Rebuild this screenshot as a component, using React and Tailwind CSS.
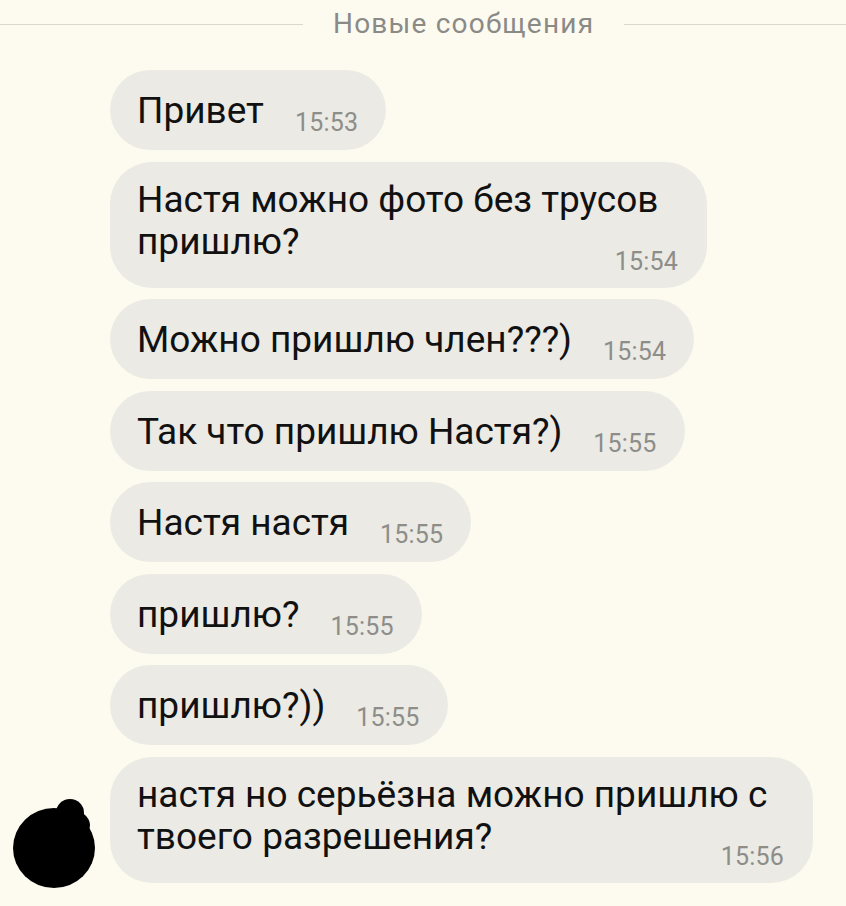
import React from 'react';

const font = { fontFamily: 'Roboto, "Noto Sans", sans-serif' };

function Time({ t }) {
  return <span className="text-[25px] leading-none text-[#8d8d8a] tracking-[0.2px] whitespace-nowrap">{t}</span>;
}

function Bubble({ text, time }) {
  return (
    <div className="inline-flex items-baseline h-[80px] rounded-full bg-[#ebeae4] pl-[27px] pr-[28px] pt-[22px] self-start">
      <span className="text-[37px] leading-none text-[#111] whitespace-nowrap">{text}</span>
      <span className="ml-[31px] translate-y-[8px]">
        <Time t={time} />
      </span>
    </div>
  );
}

function LongBubble({ first, last, time, width }) {
  return (
    <div className={`rounded-[42px] bg-[#ebeae4] pl-[27px] pr-[29px] pt-[17px] pb-[25px] text-[37px] leading-[42px] text-[#111] whitespace-nowrap ${width}`}>
      <div>{first}</div>
      <div className="flex items-baseline justify-between">
        <span>{last}</span>
        <span className="translate-y-[16px]">
          <Time t={time} />
        </span>
      </div>
    </div>
  );
}

export default function App() {
  return (
    <div className="w-[846px] h-[906px] bg-[#fdfbf0] overflow-hidden" style={font}>
      <div className="flex items-center pt-[8px]">
        <div className="w-[303px] h-px bg-[#d9d7cf]" />
        <span className="px-[30px] text-[28px] text-[#8a8a87] leading-[32px] tracking-[1.2px]">Новые сообщения</span>
        <div className="flex-1 h-px bg-[#d9d7cf]" />
      </div>

      <div className="flex flex-col gap-[11.5px] pl-[110px] mt-[30px]">
        <Bubble text="Привет" time="15:53" />
        <LongBubble first="Настя можно фото без трусов" last="пришлю?" time="15:54" width="w-[597px]" />
        <Bubble text="Можно пришлю член???)" time="15:54" />
        <Bubble text="Так что пришлю Настя?)" time="15:55" />
        <Bubble text="Настя настя" time="15:55" />
        <Bubble text="пришлю?" time="15:55" />
        <Bubble text="пришлю?))" time="15:55" />
        <div className="relative">
          <svg className="absolute left-[-98px] top-[40px]" width="86" height="92" viewBox="0 0 86 92">
            <ellipse cx="42" cy="51" rx="41" ry="40" fill="#000" />
            <circle cx="58" cy="16" r="14" fill="#000" />
            <ellipse cx="56" cy="28" rx="22" ry="16" fill="#000" />
          </svg>
          <LongBubble first="настя но серьёзна можно пришлю с" last="твоего разрешения?" time="15:56" width="w-[703px]" />
        </div>
      </div>
    </div>
  );
}
